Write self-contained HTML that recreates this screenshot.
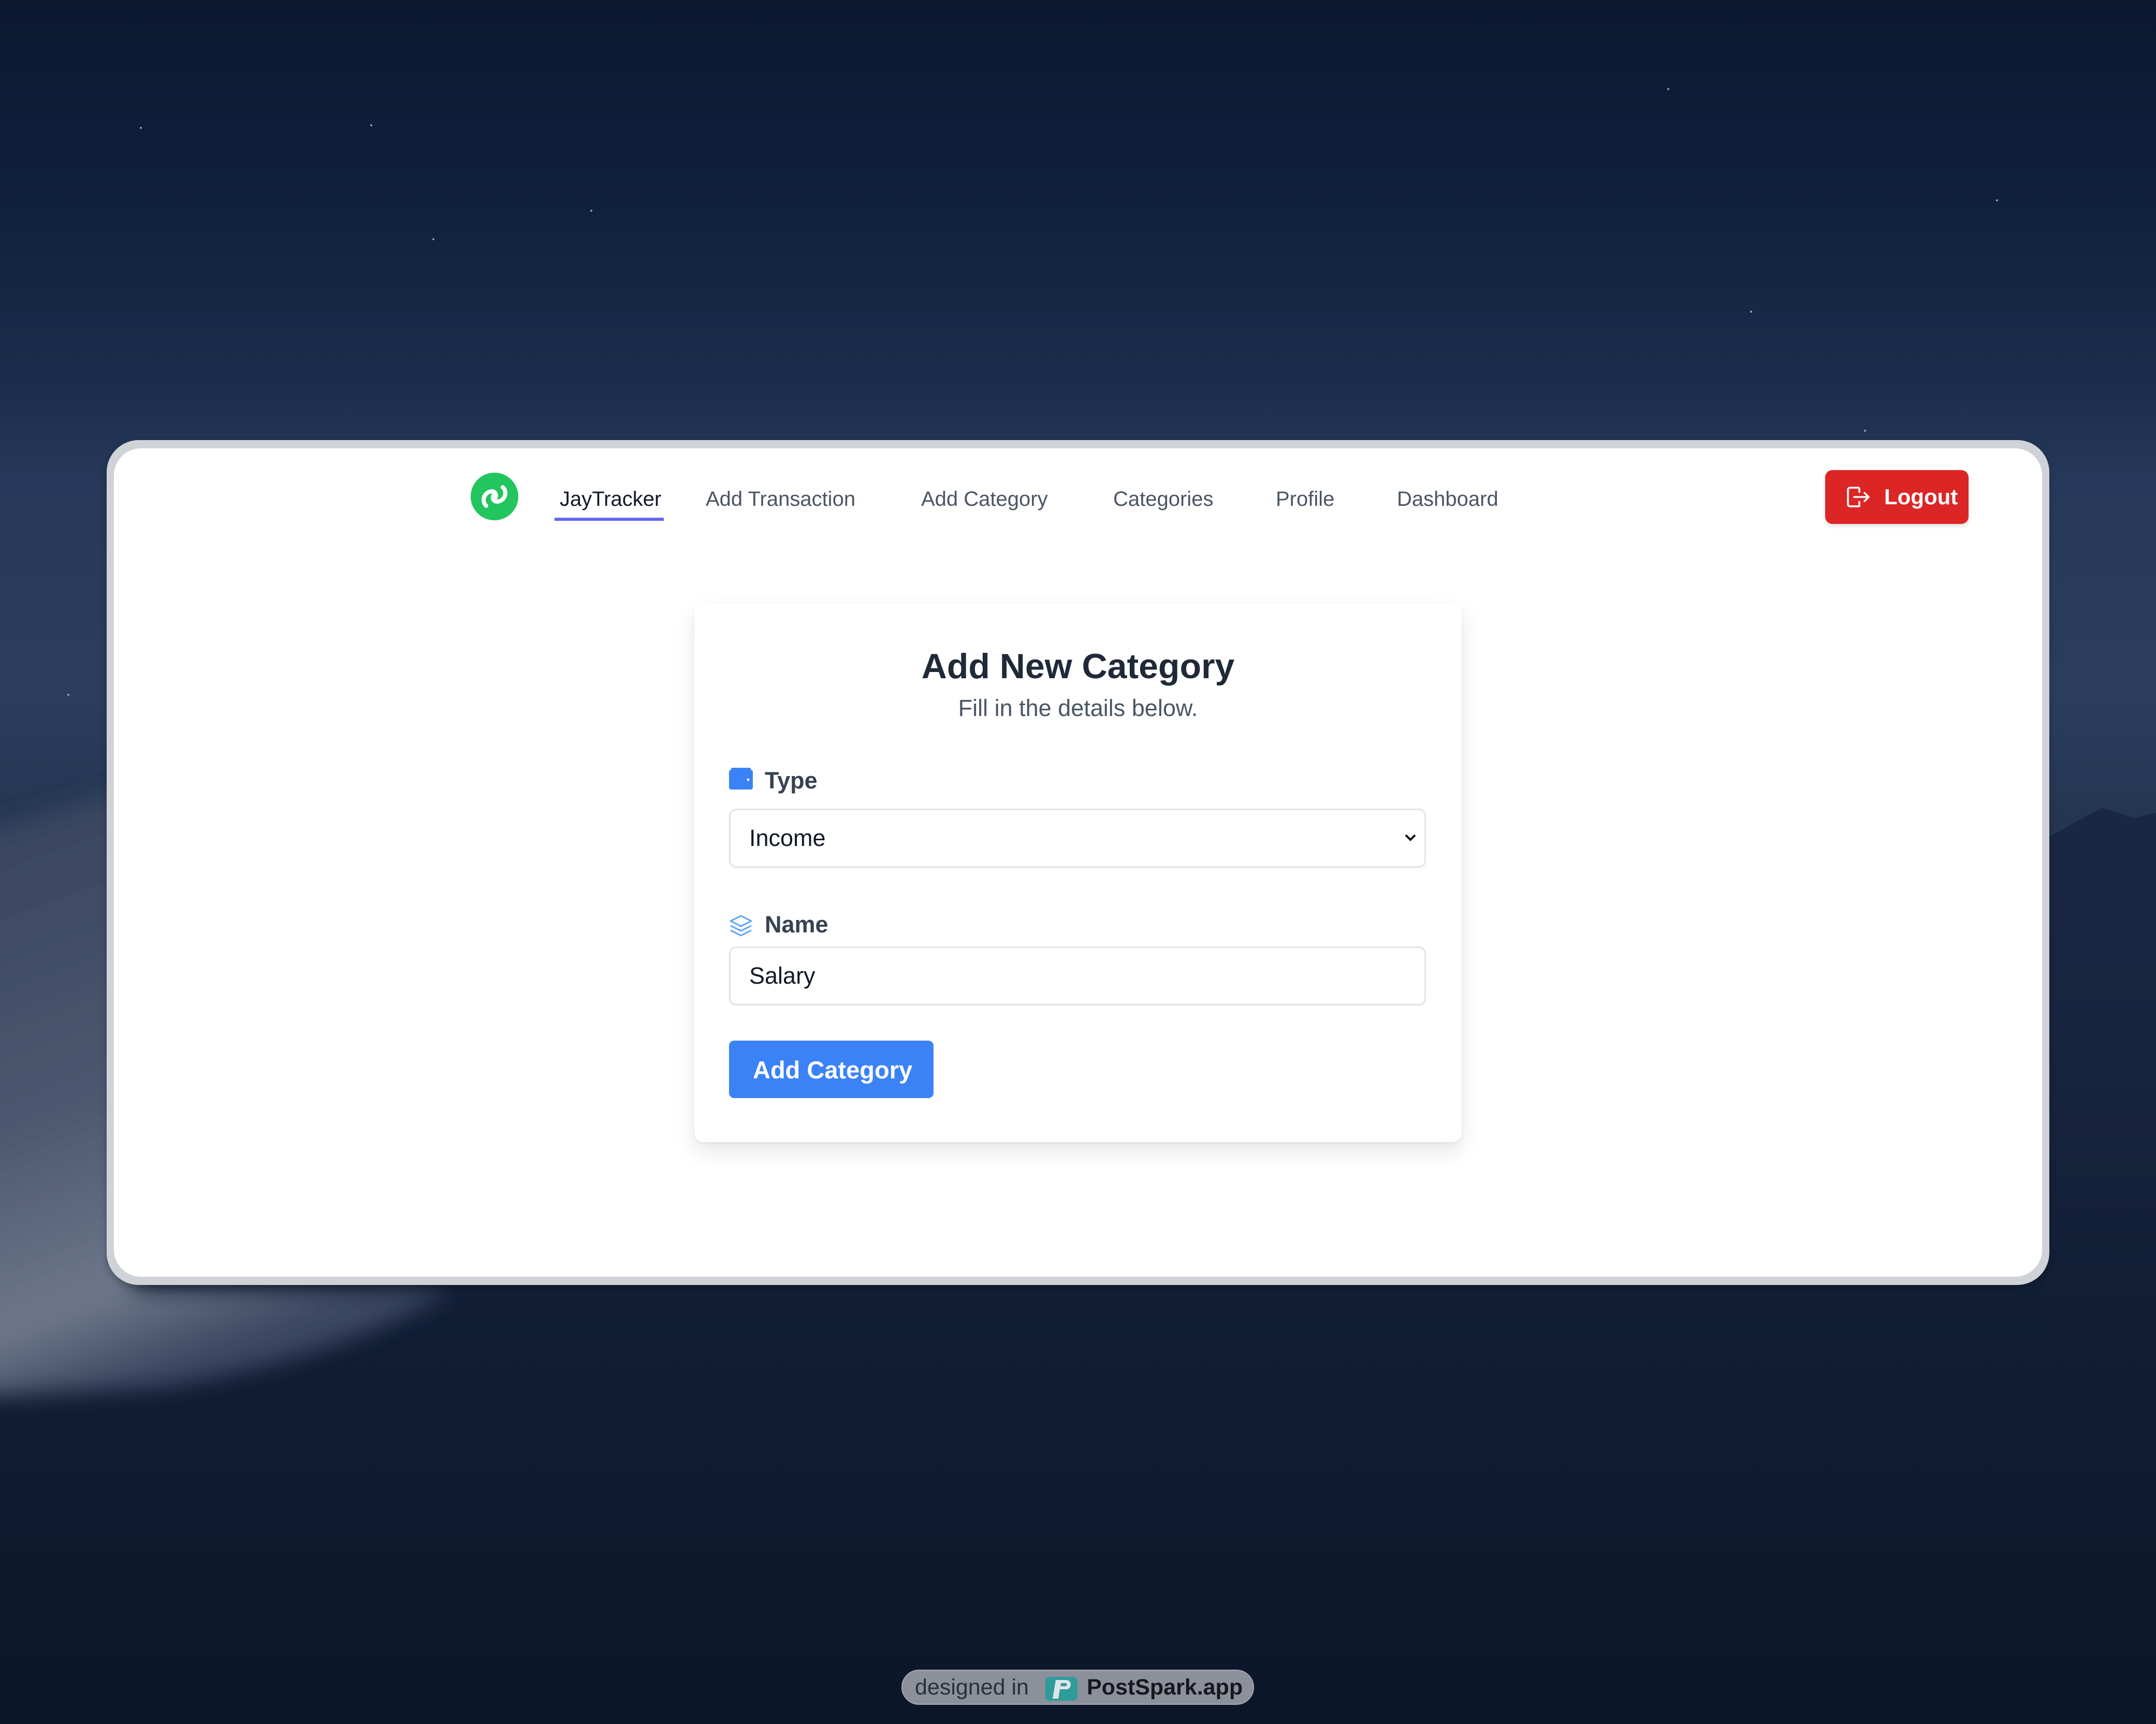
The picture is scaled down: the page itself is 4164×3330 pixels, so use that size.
<!DOCTYPE html>
<html><head><meta charset="utf-8"><style>
*{margin:0;padding:0;box-sizing:border-box}
html,body{width:4164px;height:3330px;overflow:hidden}
body{position:relative;font-family:"Liberation Sans",sans-serif;
background:linear-gradient(180deg,#0b1830 0%,#10213d 12%,#1a2d4a 22%,#27395a 28%,#2b3e5c 40%,#22334f 50%,#17263f 62%,#101d34 78%,#0c1629 100%);}
.star{position:absolute;width:4px;height:4px;border-radius:50%;background:#c8d4e8;opacity:.7}
.frame{position:absolute;left:206px;top:850px;width:3752px;height:1632px;border-radius:62px;background:#cfd3d7;box-shadow:0 6px 14px rgba(0,0,0,.25)}
.win{position:absolute;left:220px;top:866px;width:3724px;height:1600px;border-radius:52px;background:#fff}
.logo{position:absolute;left:909px;top:913px;width:92px;height:92px}
.nav{position:absolute;top:936px;font-size:40px;color:#4b5563;line-height:56px;white-space:nowrap}
.nav.active{color:#111827}
.uline{position:absolute;left:1071px;top:1000px;width:211px;height:6px;background:#6366f1}
.logout{position:absolute;left:3525px;top:908px;width:277px;height:104px;background:#dc2626;border-radius:14px;color:#fff;font-size:42px;font-weight:bold;box-shadow:0 4px 8px rgba(0,0,0,.12)}
.logout span{position:absolute;left:114px;top:24px;line-height:56px}
.card{position:absolute;left:1341px;top:1166px;width:1482px;height:1040px;background:#fff;border-radius:18px;box-shadow:0 18px 40px rgba(0,0,0,.10),0 2px 6px rgba(0,0,0,.05)}
.title{position:absolute;left:0;width:100%;top:1248px;text-align:center;font-size:68px;font-weight:bold;color:#1f2937}
.sub{position:absolute;left:0;width:100%;top:1342px;text-align:center;font-size:45px;color:#4b5563}
.lbl{position:absolute;left:1477px;font-size:45px;font-weight:bold;color:#374151}
.field{position:absolute;left:1408px;width:1346px;height:114px;border:3px solid #e2e5e9;border-radius:14px;background:#fff;box-shadow:0 2px 4px rgba(0,0,0,.04)}
.field span{position:absolute;left:36px;top:28px;font-size:45px;color:#111827}
.btn{position:absolute;left:1408px;top:2010px;width:395px;height:111px;background:#3b82f6;border-radius:10px;color:#fff;font-size:47px;font-weight:bold}
.btn span{position:absolute;left:46px;top:29px}
.badge{position:absolute;left:1741px;top:3225px;width:681px;height:68px;border-radius:34px;background:#8c909a;border:2px solid #a3a7b0}
.badge .t1{position:absolute;left:24px;top:8px;font-size:43px;color:#2b2f36}
.badge .t2{position:absolute;left:356px;top:8px;font-size:43px;color:#15181d;font-weight:bold}
</style></head><body>
<svg style="position:absolute;left:0;top:0" width="4164" height="3330">
<defs>
<linearGradient id="dg" x1="0" y1="0" x2="0.3" y2="1"><stop offset="0" stop-color="#34415c"/><stop offset="0.55" stop-color="#4d5870"/><stop offset="0.85" stop-color="#6e778a"/><stop offset="1" stop-color="#3a4660"/></linearGradient>
<linearGradient id="rg" x1="0" y1="0" x2="0" y2="1"><stop offset="0" stop-color="#1a2743"/><stop offset="1" stop-color="#0f1a31" stop-opacity="0"/></linearGradient>
<filter id="bl" x="-0.3" y="-0.3" width="1.6" height="1.6"><feGaussianBlur stdDeviation="22"/></filter>
</defs>
<path d="M-100 1620 L120 1560 L260 1520 L260 2490 L870 2490 C760 2560 560 2640 300 2680 L-100 2700 Z" fill="url(#dg)" filter="url(#bl)"/>
<path d="M3950 1620 L4060 1560 L4120 1580 L4164 1570 L4164 2900 L3950 2900 Z" fill="url(#rg)"/>
</svg>
<div class="star" style="left:270px;top:245px"></div><div class="star" style="left:835px;top:460px"></div>
<div class="star" style="left:1140px;top:405px"></div><div class="star" style="left:387px;top:1455px"></div>
<div class="star" style="left:715px;top:240px"></div><div class="star" style="left:3600px;top:830px"></div>
<div class="star" style="left:3220px;top:170px"></div><div class="star" style="left:3855px;top:385px"></div>
<div class="star" style="left:130px;top:1340px"></div><div class="star" style="left:3380px;top:600px"></div>
<div class="frame"></div>
<div class="win"></div>
<svg class="logo" viewBox="0 0 92 92"><circle cx="46" cy="46" r="46" fill="#22c55e"/>
<g fill="none" stroke="#fff" stroke-width="8" stroke-linecap="round">
<path d="M30 64 C20 54 26 38 40 36 C50 35 52 48 44 52"/>
<path d="M62 28 C72 38 66 54 52 56 C42 57 40 44 48 40"/></g></svg>
<div class="nav active" style="left:1081px">JayTracker</div>
<div class="uline"></div>
<div class="nav" style="left:1363px">Add Transaction</div>
<div class="nav" style="left:1779px">Add Category</div>
<div class="nav" style="left:2150px">Categories</div>
<div class="nav" style="left:2464px">Profile</div>
<div class="nav" style="left:2698px">Dashboard</div>
<div class="logout"><svg style="position:absolute;left:40px;top:30px" width="50" height="44" viewBox="0 0 50 44"><path d="M26 4 H8 a4 4 0 0 0 -4 4 V36 a4 4 0 0 0 4 4 H26 V30 M26 14 V4" fill="none" stroke="#fff" stroke-width="3.5" stroke-linejoin="round"/><path d="M16 22 H44 M36 14 L44 22 L36 30" fill="none" stroke="#fff" stroke-width="3.5" stroke-linecap="round" stroke-linejoin="round"/></svg><span>Logout</span></div>
<div class="card"></div>
<div class="title">Add New Category</div>
<div class="sub">Fill in the details below.</div>
<svg style="position:absolute;left:1408px;top:1483px" width="46" height="42" viewBox="0 0 46 42"><rect x="0" y="4" width="46" height="38" rx="4" fill="#3b82f6"/><rect x="4" y="0" width="38" height="5" rx="2" fill="#3b82f6"/><circle cx="37" cy="23" r="2.5" fill="#fff"/></svg>
<div class="lbl" style="top:1482px">Type</div>
<div class="field" style="top:1562px"><span>Income</span>
<svg style="position:absolute;right:14px;top:44px" width="26" height="18" viewBox="0 0 26 18"><path d="M4 4 L13 13 L22 4" fill="none" stroke="#111" stroke-width="4"/></svg></div>
<svg style="position:absolute;left:1408px;top:1766px" width="46" height="48" viewBox="0 0 46 48"><g fill="none" stroke="#60a5fa" stroke-width="3" stroke-linejoin="round"><path d="M23 3 L43 13 L23 23 L3 13 Z"/><path d="M3 22 L23 32 L43 22"/><path d="M3 31 L23 41 L43 31"/></g></svg>
<div class="lbl" style="top:1760px">Name</div>
<div class="field" style="top:1828px"><span>Salary</span></div>
<div class="btn"><span>Add Category</span></div>
<div class="badge"><span class="t1">designed in</span>
<svg style="position:absolute;left:276px;top:10px" width="62" height="48" viewBox="0 0 62 48"><rect x="0" y="2" width="62" height="46" rx="8" fill="#2f9b9a"/><path d="M14 44 L20 8 H40 C52 8 52 26 40 26 H28 L25 44 Z" fill="#dfe4e8"/><path d="M30 14 H38 C43 14 43 20 38 20 H29 Z" fill="#2f9b9a"/></svg>
<span class="t2">PostSpark.app</span></div>
</body></html>
